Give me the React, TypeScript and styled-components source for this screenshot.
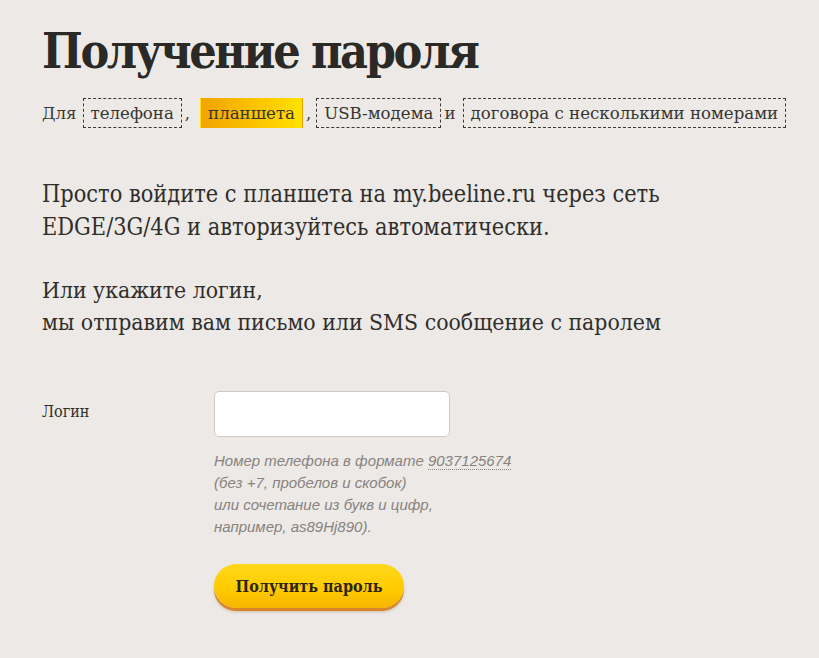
import React from "react";
import styled, { createGlobalStyle } from "styled-components";

const Global = createGlobalStyle`
  html, body { margin: 0; padding: 0; background: #ede9e6; }
  body { font-family: "DejaVu Serif", serif; color: #2b2a28; }
`;

const Page = styled.div`
  padding: 24px 42px 40px 42px;
  min-height: 658px;
  box-sizing: border-box;
  background: #ede9e6;
`;

const Title = styled.h1`
  margin: 0;
  font-family: "DejaVu Serif Condensed", "DejaVu Serif", serif;
  font-weight: bold;
  font-size: 48px;
  line-height: 54px;
  letter-spacing: -2.4px;
  color: #2a2926;
`;

const Tabs = styled.div`
  display: flex;
  align-items: center;
  margin-top: 20px;
  white-space: nowrap;
  font-family: "DejaVu Serif", serif;
  font-size: 16.6px;
  color: #3a3936;
`;

const Word = styled.span<{ $gap?: number }>`
  flex-shrink: 0;
  margin-right: ${(p) => p.$gap ?? 6}px;
`;

const Tab = styled.span<{ $active?: boolean }>`
  flex-shrink: 0;
  display: inline-flex;
  align-items: center;
  height: 30px;
  padding: 0 7px;
  box-sizing: border-box;
  border: 1px dashed ${(p) => (p.$active ? "transparent" : "#3a3936")};
  background: ${(p) => (p.$active ? "linear-gradient(90deg, #f3a300 0%, #ffd400 80%, #ffe300 100%)" : "transparent")};
  color: #363532;
  margin-right: 3px;
`;

const Lead = styled.p<{ $size: number }>`
  margin: 49px 0 0 0;
  font-family: "DejaVu Serif Condensed", "DejaVu Serif", serif;
  font-size: ${(p) => p.$size}px;
  line-height: 33px;
  color: #2f2e2b;
`;

const Lead2 = styled(Lead)`
  margin-top: 31px;
  line-height: 32px;
`;

const Form = styled.div`
  display: grid;
  grid-template-columns: 172px 236px;
  margin-top: 53px;
`;

const Label = styled.label`
  font-family: "DejaVu Serif Condensed", "DejaVu Serif", serif;
  font-size: 16px;
  color: #2f2e2b;
  padding-top: 11px;
`;

const Field = styled.div`
  display: flex;
  flex-direction: column;
`;

const Input = styled.input`
  width: 236px;
  height: 46px;
  box-sizing: border-box;
  border: 1px solid #cfcac6;
  border-radius: 5px;
  background: #fff;
  outline: none;
`;

const Hint = styled.div`
  margin-top: 13px;
  width: 360px;
  font-family: "Liberation Sans", Arial, sans-serif;
  font-style: italic;
  font-size: 15px;
  line-height: 22px;
  color: #87837f;
`;

const Dotted = styled.span`
  border-bottom: 1px dotted #87837f;
`;

const Button = styled.button`
  margin-top: 26px;
  width: 190px;
  height: 44px;
  border: none;
  border-radius: 22px;
  background: linear-gradient(180deg, #ffd71a 0%, #ffcc00 55%, #f7b400 100%);
  box-shadow: 0 3px 0 #d7862b, 0 4px 3px rgba(120, 70, 10, 0.25);
  font-family: "DejaVu Serif Condensed", "DejaVu Serif", serif;
  font-weight: bold;
  font-size: 16px;
  color: #2c2415;
  cursor: pointer;
`;

export default function App() {
  return (
    <>
      <Global />
      <Page>
        <Title>Получение пароля</Title>
        <Tabs>
          <Word $gap={6}>Для</Word>
          <Tab>телефона</Tab>
          <Word $gap={10}>,</Word>
          <Tab $active>планшета</Tab>
          <Word $gap={5}>,</Word>
          <Tab>USB-модема</Tab>
          <Word $gap={7}>и</Word>
          <Tab>договора с несколькими номерами</Tab>
        </Tabs>
        <Lead $size={23.3}>
          Просто войдите с планшета на my.beeline.ru через сеть
          <br />
          EDGE/3G/4G и авторизуйтесь автоматически.
        </Lead>
        <Lead2 $size={22.8}>
          Или укажите логин,
          <br />
          мы отправим вам письмо или SMS сообщение с паролем
        </Lead2>
        <Form>
          <Label htmlFor="login">Логин</Label>
          <Field>
            <Input id="login" type="text" />
            <Hint>
              Номер телефона в формате <Dotted>9037125674</Dotted>
              <br />
              (без +7, пробелов и скобок)
              <br />
              или сочетание из букв и цифр,
              <br />
              например, as89Hj890).
            </Hint>
            <Button>Получить пароль</Button>
          </Field>
        </Form>
      </Page>
    </>
  );
}
